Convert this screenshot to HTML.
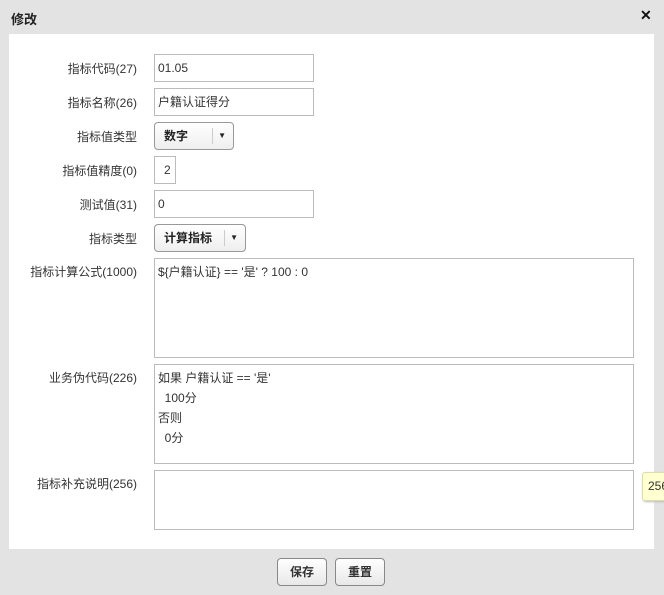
<html><head><style>
body{margin:0;width:664px;height:595px;background:#e3e3e3;font-family:"Liberation Sans","Noto Sans CJK SC",sans-serif;font-size:12px;color:#333;position:relative;overflow:hidden}
.a{position:absolute}
.t{left:11px;top:9px;font-weight:bold;font-size:13px;color:#222}
.x{left:640px;top:7px;font-weight:bold;font-size:14px;color:#111}
.p{left:9px;top:34px;width:645px;height:515px;background:#fff}
.l{width:128px;left:9px;text-align:right;font-size:12px;color:#333}
.i{border:1px solid #bbb;box-sizing:border-box;padding:0 3px;line-height:26px;font-size:12px;background:#fff}
.s{border:1px solid #999;border-radius:4px;box-sizing:border-box;background:linear-gradient(#fff,#eee);font-weight:bold;font-size:12px;line-height:26px;padding-left:9px;color:#222}
.s i{position:absolute;right:20px;top:5px;height:16px;border-left:1px solid #ccc}
.s b{position:absolute;right:7px;top:0;font-size:8px}
.ta{border:1px solid #bbb;box-sizing:border-box;padding:3px 3px;line-height:20px;background:#fff;font-size:12px}
.bt{border:1px solid #888;border-radius:4px;box-sizing:border-box;background:linear-gradient(#fff,#e8e8e8);font-weight:bold;font-size:12px;text-align:center;line-height:26px;width:50px;height:28px;top:558px}
</style></head><body>
<div class="a t">修改</div><div class="a x">✕</div>
<div class="a p"></div>
<div class="a l" style="top:60px">指标代码(27)</div>
<div class="a i" style="left:154px;top:54px;width:160px;height:28px">01.05</div>
<div class="a l" style="top:94px">指标名称(26)</div>
<div class="a i" style="left:154px;top:88px;width:160px;height:28px">户籍认证得分</div>
<div class="a l" style="top:128px">指标值类型</div>
<div class="a s" style="left:154px;top:122px;width:80px;height:28px">数字<i></i><b>▼</b></div>
<div class="a l" style="top:162px">指标值精度(0)</div>
<div class="a i" style="left:154px;top:156px;width:22px;height:28px;padding-left:9px">2</div>
<div class="a l" style="top:196px">测试值(31)</div>
<div class="a i" style="left:154px;top:190px;width:160px;height:28px">0</div>
<div class="a l" style="top:230px">指标类型</div>
<div class="a s" style="left:154px;top:224px;width:92px;height:28px">计算指标<i></i><b>▼</b></div>
<div class="a l" style="top:263px">指标计算公式(1000)</div>
<div class="a ta" style="left:154px;top:258px;width:480px;height:100px">${户籍认证} == '是' ? 100 : 0</div>
<div class="a l" style="top:369px">业务伪代码(226)</div>
<div class="a ta" style="left:154px;top:364px;width:480px;height:100px">如果 户籍认证 == '是'<br>&nbsp;&nbsp;100分<br>否则<br>&nbsp;&nbsp;0分</div>
<div class="a l" style="top:475px">指标补充说明(256)</div>
<div class="a ta" style="left:154px;top:470px;width:480px;height:60px"></div>
<div class="a" style="left:642px;top:472px;width:30px;height:27px;background:#ffffd0;border:1px solid #dda;border-radius:3px;box-shadow:1px 1px 2px #bbb;line-height:26px;padding-left:5px">256</div>
<div class="a bt" style="left:277px">保存</div>
<div class="a bt" style="left:335px">重置</div>
</body></html>
